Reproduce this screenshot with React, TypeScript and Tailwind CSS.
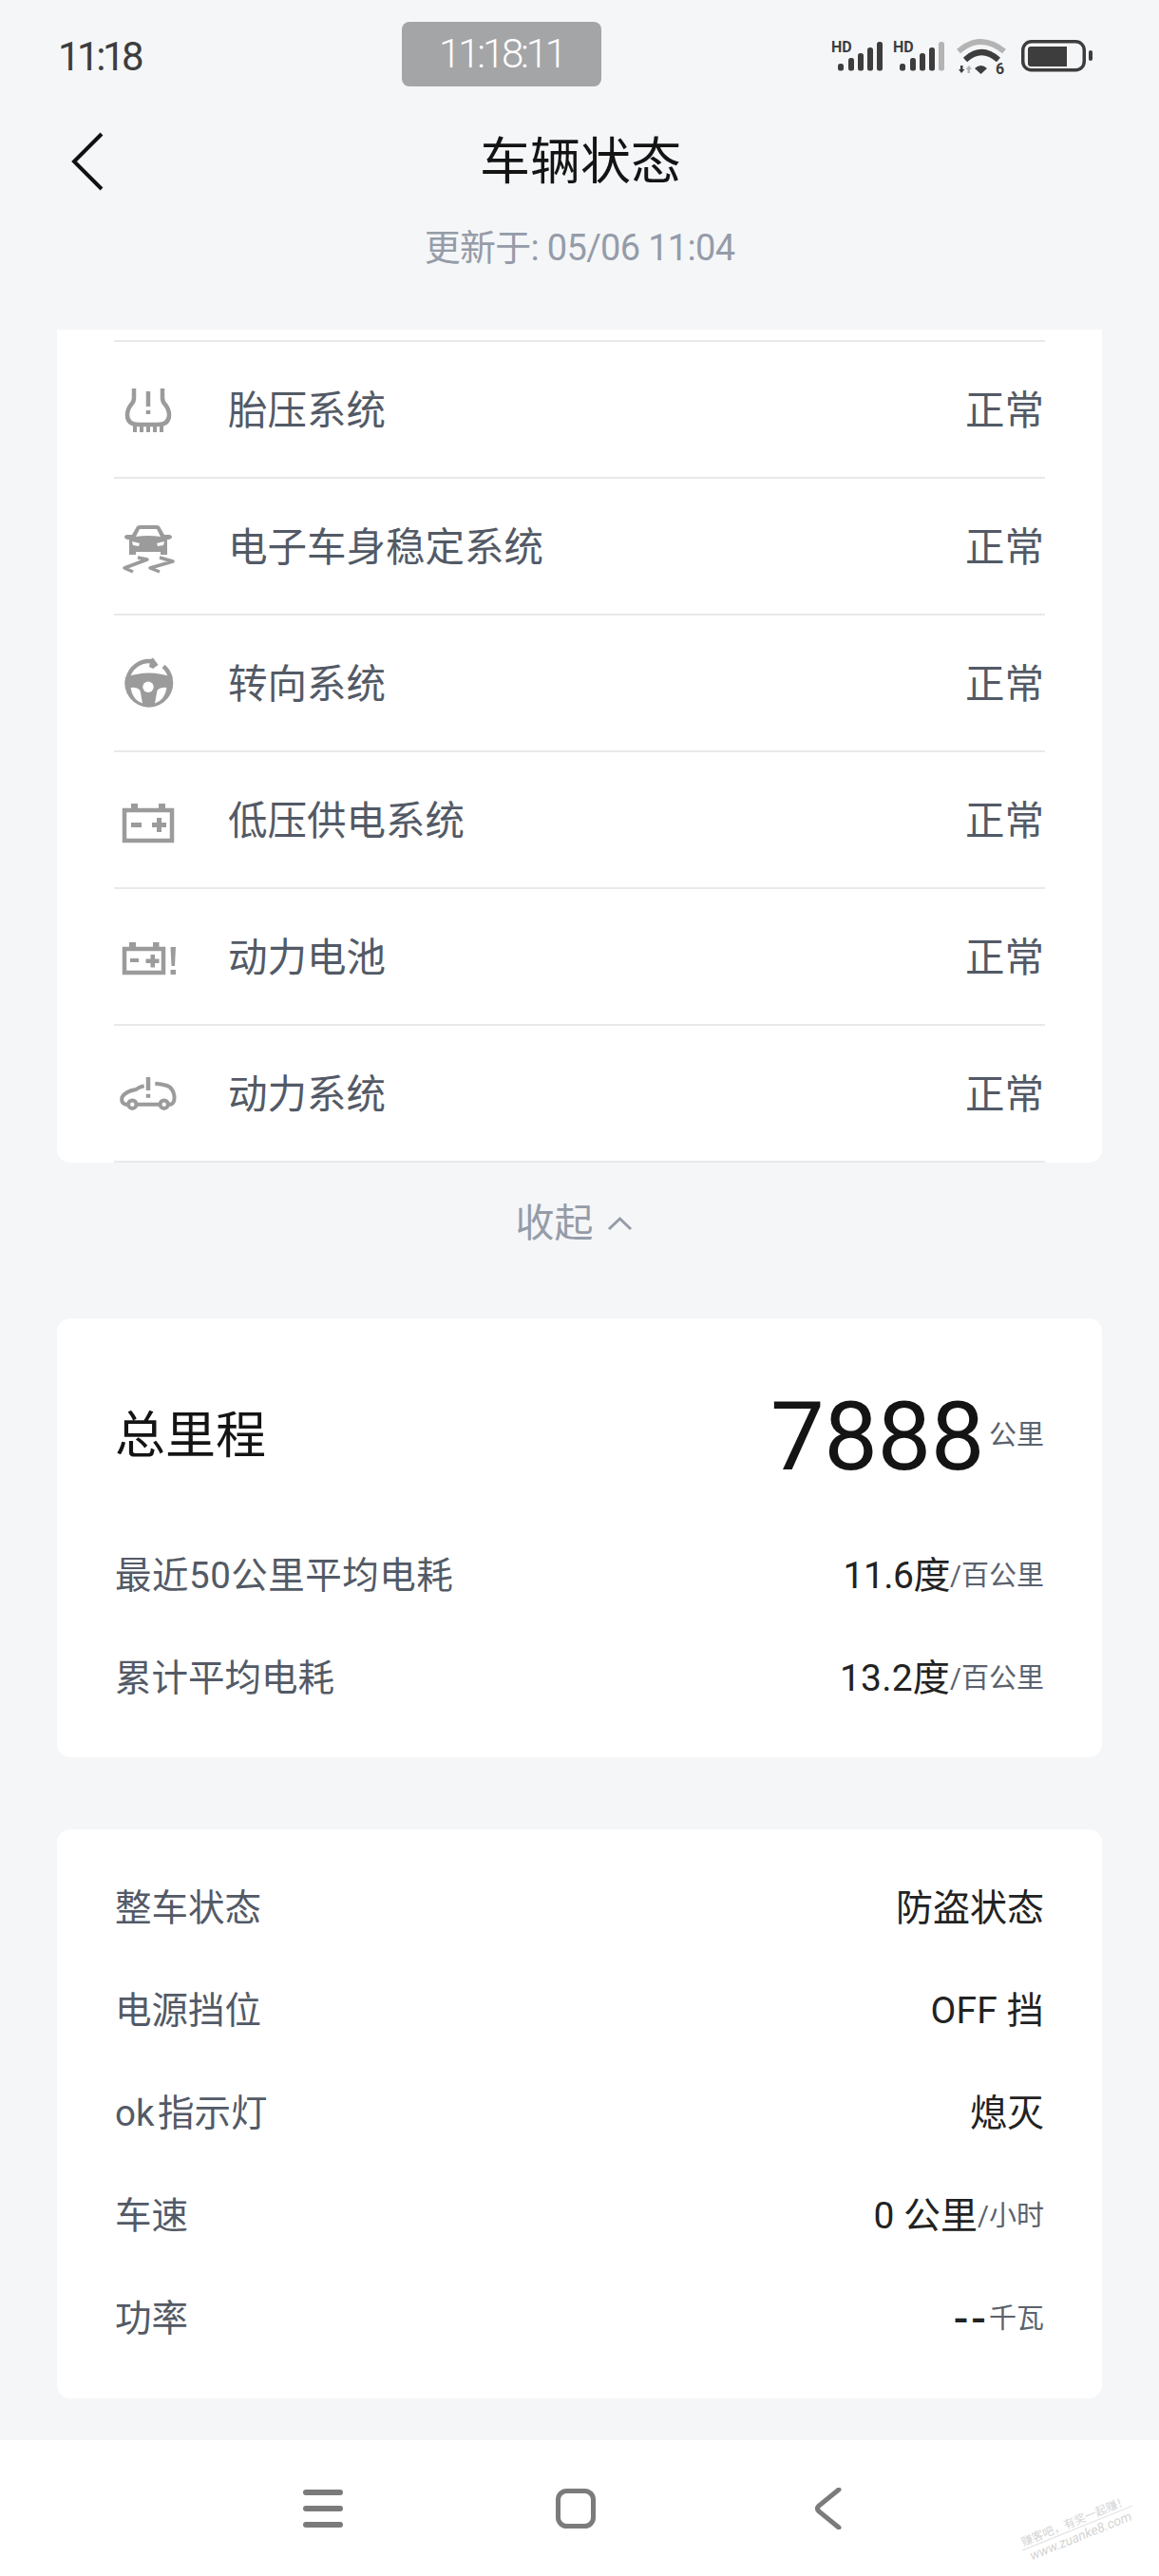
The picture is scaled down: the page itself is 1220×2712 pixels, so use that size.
const GREY = "#9b9b9b";

function TireIcon() {
  return (
    <svg width="72" height="72" viewBox="0 0 72 72" fill="none" stroke={GREY} strokeWidth="4.5">
      <path d="M21 14V24Q21 28 18 31Q14 36 14 42Q14 52 26 52H46Q58 52 58 42Q58 36 54 31Q51 28 51 24V14" />
      <path d="M22 52V60M29 52V60M36 52V60M43 52V60M50 52V60" strokeWidth="4" />
      <path d="M36 17V33M36 37V41" />
    </svg>
  );
}

function SkidIcon() {
  return (
    <svg width="72" height="72" viewBox="0 0 72 72" fill="none">
      <path
        fill={GREY}
        d="M27 14H45Q48 14 49 17L53 24H58Q61 24 61 26.5Q61 28 58 29H56V45H49V42H23V45H16V29H14Q11 28 11 26.5Q11 24 14 24H19L23 17Q24 14 27 14Z"
      />
      <path fill="#fff" d="M27 18H45L49 26Q36 24 23 26Z" />
      <path fill="#fff" d="M19 31L27 33L26 36L20 35Z M53 31L45 33L46 36L52 35Z" />
      <path
        stroke={GREY}
        strokeWidth="3.5"
        strokeLinejoin="round"
        d="M25 48L35 50L11 59L20 63M48 48L62 52L38 59L48 63"
      />
    </svg>
  );
}

function WheelIcon() {
  return (
    <svg width="72" height="72" viewBox="0 0 72 72" fill="none">
      <path fill={GREY} d="M12 30Q36.7 21 61.5 30A25.5 25.5 0 1 1 12 30Z" />
      <circle cx="36" cy="40.3" r="5.7" fill="#fff" />
      <path fill="#fff" d="M17.500 41Q24 40 27.500 44Q29 52 30 57.500Q19.500 54 17.500 41ZM55.500 41Q49 40 45.500 44Q44 52 43 57.500Q53.500 54 55.500 41Z" />
      <path stroke={GREY} strokeWidth="4.500" d="M14.500 31A23 23 0 0 1 39 13.200M52 18.500A23 23 0 0 1 59.500 31" />
      <path fill={GREY} d="M41 9.5L46.5 17L41 21L37 19L38.5 11Z" />
    </svg>
  );
}

function BatteryIcon() {
  return (
    <svg width="72" height="72" viewBox="0 0 72 72" fill="none">
      <rect x="11" y="26" width="50" height="32" stroke={GREY} strokeWidth="4.5" />
      <path fill={GREY} d="M18 19H25V24H18ZM47 19H54V24H47ZM18 39H29V44H18ZM40 39H45V34H50V39H55V44H50V49H45V44H40Z" />
    </svg>
  );
}

function BatteryAlertIcon() {
  return (
    <svg width="72" height="72" viewBox="0 0 72 72" fill="none">
      <rect x="11" y="28" width="41" height="25" stroke={GREY} strokeWidth="4.5" />
      <path
        fill={GREY}
        d="M16 21H23V26H16ZM41 21H47.500V26H41ZM17 38H26V42H17ZM33.500 38.500H38.500V34H43V38.500H47.500V43H43V47.500H38.500V43H33.500ZM59.500 26H65L64 46H60.500ZM59.500 50H65V55H59.500Z"
      />
    </svg>
  );
}

function CarAlertIcon() {
  return (
    <svg width="72" height="72" viewBox="0 0 72 72" fill="none" stroke={GREY} strokeWidth="4">
      <path d="M31.700 28.300Q27 29 23 32Q12 34 8.500 40Q7 46 12 47.700H15M24 47.700H48M57.500 47.700H60Q64 46 63.500 39Q62 30 56 28Q50 26 43.300 25.700" />
      <circle cx="19.300" cy="47.700" r="4.200" />
      <circle cx="52.700" cy="47.700" r="4.200" />
      <path d="M36 19V33M36 36.700V40.700" strokeWidth="4.500" />
    </svg>
  );
}

function SignalIcon({ lastBar }: { lastBar: string }) {
  const bars = [
    { x: 7, y: 26 },
    { x: 18, y: 20 },
    { x: 28, y: 15 },
    { x: 38, y: 9 },
  ];
  return (
    <svg width="56" height="36" viewBox="0 0 56 36">
      <text x="0" y="13.500" fontFamily="Roboto, sans-serif" fontWeight="700" fontSize="16" fill="#3d3d3d">
        HD
      </text>
      {bars.map((bar) => (
        <rect key={bar.x} x={bar.x} y={bar.y} width="6" height={33.5 - bar.y} rx="2.500" fill="#3d3d3d" />
      ))}
      <rect x="48" y="3" width="6" height="30.500" rx="2.500" fill={lastBar} />
    </svg>
  );
}

function WifiIcon() {
  return (
    <svg width="52" height="38" viewBox="0 0 52 38" fill="none">
      <path d="M2 14Q25 -6 50 14" stroke="#b4b4b4" strokeWidth="6" />
      <path d="M9 23Q26 7 44 23" stroke="#3d3d3d" strokeWidth="6" />
      <path d="M19 32Q25.500 26 32 32L25.500 38Z" fill="#3d3d3d" />
      <path d="M4 29H6.500V33H8.500L5 37L2 33H4Z" fill="#3d3d3d" />
      <path d="M11.500 37H14V33H16L13 29L9.500 33H11.500Z" fill="#b4b4b4" />
      <text x="41" y="38" fontFamily="Roboto, sans-serif" fontWeight="700" fontSize="16" fill="#3d3d3d">
        6
      </text>
    </svg>
  );
}

function BatteryStatusIcon() {
  return (
    <svg width="75" height="34" viewBox="0 0 75 34" fill="none">
      <rect x="1.750" y="1.750" width="64.500" height="30" rx="9" stroke="#3d3d3d" strokeWidth="3.500" />
      <path d="M10 7H48V28H10Q7 28 7 25V10Q7 7 10 7Z" fill="#3d3d3d" />
      <rect x="71" y="11" width="4" height="11" rx="2" fill="#3d3d3d" />
    </svg>
  );
}

const systems = [
  { name: "胎压系统", icon: <TireIcon /> },
  { name: "电子车身稳定系统", icon: <SkidIcon /> },
  { name: "转向系统", icon: <WheelIcon /> },
  { name: "低压供电系统", icon: <BatteryIcon /> },
  { name: "动力电池", icon: <BatteryAlertIcon /> },
  { name: "动力系统", icon: <CarAlertIcon /> },
];

const vehicleRows = [
  { label: "整车状态", value: "防盗状态", unit: "", valueClass: "" },
  { label: "电源挡位", value: "OFF 挡", unit: "", valueClass: "tracking-[0.2px]" },
  { label: "ok 指示灯", value: "熄灭", unit: "", labelClass: "[word-spacing:-6px]", valueClass: "" },
  { label: "车速", value: "0 公里", unit: "/小时", valueClass: "" },
  { label: "功率", value: "--", unit: "千瓦", valueClass: "text-[46px] font-medium tracking-[3px]" },
];

function DataRow({
  label,
  value,
  unit,
  labelClass = "",
  valueClass = "",
}: {
  label: string;
  value: string;
  unit: string;
  labelClass?: string;
  valueClass?: string;
}) {
  return (
    <div className="flex h-[108px] items-center justify-between">
      <span className={`text-[38.5px] text-[#535a66] ${labelClass}`}>{label}</span>
      <span className="flex items-center">
        <span className={`text-[39px] text-[#222222] ${valueClass}`}>{value}</span>
        {unit && <span className="text-[29px] text-[#5b626d]">{unit}</span>}
      </span>
    </div>
  );
}

export default function App() {
  return (
    <div className="relative flex h-[2712px] w-[1220px] flex-col overflow-hidden bg-[#f5f6f8] font-['Roboto','Noto_Sans_CJK_SC',sans-serif] leading-none">
      {/* status bar */}
      <div className="flex h-[114px] items-center pl-[61px] pr-[70px]">
        <span className="mt-[6px] w-[362px] text-[42px] tracking-[-3.500px] text-[#3d3d3d]">11:18</span>
        <span className="flex h-[68px] w-[210px] items-center justify-center rounded-[8px] bg-[#a4a5a7] text-[42px] font-light tracking-[-3.200px] text-white">
          11:18:11
        </span>
        <div className="ml-auto mt-[4px] flex items-center">
          <SignalIcon lastBar="#3d3d3d" />
          <div className="ml-[9px]">
            <SignalIcon lastBar="#b4b4b4" />
          </div>
          <div className="ml-[11px]">
            <WifiIcon />
          </div>
          <div className="ml-[16px]">
            <BatteryStatusIcon />
          </div>
        </div>
      </div>

      {/* header */}
      <div className="grid h-[112px] grid-cols-[1fr_auto_1fr] items-center pl-[74px] pr-[72px]">
        <svg width="36" height="62" viewBox="0 0 36 62" fill="none" stroke="#111111" strokeWidth="4">
          <path d="M33 2L4 31L33 60" strokeLinejoin="miter" />
        </svg>
        <h1 className="pt-[2px] text-[53px] font-normal text-[#141414]">车辆状态</h1>
        <span />
      </div>
      <div className="flex h-[68px] items-center justify-center pt-[2px] text-[38px] tracking-[-0.700px] text-[#959ca8]">
        更新于: 05/06 11:04
      </div>

      {/* systems list, scrolled so the top edge is cut square */}
      <div className="mx-[60px] mt-[53px] rounded-b-[14px] bg-white px-[60px] pt-[11px]">
        <div className="border-t-2 border-[#e9e9eb]">
          {systems.map((system) => (
            <div key={system.name} className="flex h-[144px] items-center border-b-2 border-[#e9e9eb]">
              <div className="w-[120px]">{system.icon}</div>
              <span className="pt-[3px] text-[41.500px] text-[#535a66]">{system.name}</span>
              <span className="ml-auto pr-[1px] pt-[3px] text-[41.500px] text-[#535a66]">正常</span>
            </div>
          ))}
        </div>
      </div>

      <div className="flex h-[126px] items-center justify-center gap-[14px] pr-[12px] pt-[2px] text-[41px] text-[#959ca8]">
        收起
        <svg width="27" height="16" viewBox="0 0 27 16" fill="none" stroke="#959ca8" strokeWidth="3">
          <path d="M2 14L13.500 3L25 14" />
        </svg>
      </div>

      {/* mileage */}
      <div className="mx-[60px] mt-[38px] rounded-[14px] bg-white px-[61px] pb-[29px] pt-[62px]">
        <div className="flex h-[122px] items-center justify-between">
          <span className="pt-[3px] text-[53px] text-[#141414]">总里程</span>
          <span className="flex items-center gap-[5px]">
            <span className="pt-[3px] text-[101px] font-normal tracking-[-0.500px] text-[#141414]">7888</span>
            <span className="text-[29px] text-[#5b626d]">公里</span>
          </span>
        </div>
        <div className="mt-[33px]">
          <DataRow label="最近50公里平均电耗" labelClass="tracking-[0.500px]" value="11.6度" valueClass="tracking-[-0.500px]" unit="/百公里" />
          <DataRow label="累计平均电耗" value="13.2度" valueClass="tracking-[0.200px]" unit="/百公里" />
        </div>
      </div>

      {/* vehicle state */}
      <div className="mx-[60px] mt-[76px] rounded-[14px] bg-white px-[61px] pb-[30px] pt-[29px]">
        {vehicleRows.map((row) => (
          <DataRow
            key={row.label}
            label={row.label}
            labelClass={row.labelClass}
            value={row.value}
            valueClass={row.valueClass}
            unit={row.unit}
          />
        ))}
      </div>

      {/* navigation bar */}
      <div className="mt-[44px] grid h-[143px] grid-cols-[266px_266px_266px] items-center justify-center bg-white pr-[8px]">
        <div className="flex justify-center">
          <svg width="44" height="40" viewBox="0 0 44 40" fill="#7b7b7b">
            <rect x="1" y="0" width="42" height="6" rx="3" />
            <rect x="1" y="17" width="42" height="6" rx="3" />
            <rect x="1" y="34" width="42" height="6" rx="3" />
          </svg>
        </div>
        <div className="flex justify-center">
          <svg width="44" height="44" viewBox="0 0 44 44" fill="none" stroke="#7b7b7b" strokeWidth="5">
            <rect x="3.500" y="3.500" width="37" height="37" rx="9" />
          </svg>
        </div>
        <div className="flex justify-center">
          <svg width="28" height="44" viewBox="0 0 28 44" fill="none" stroke="#7b7b7b" strokeWidth="5" strokeLinecap="round">
            <path d="M25 2L4 19Q1 22 4 25L25 42" />
          </svg>
        </div>
      </div>

      {/* forum watermark */}
      <div className="absolute bottom-[35px] right-[23px] w-[125px] -rotate-[22deg] text-center text-[#d4d4d4]">
        <div className="border-b border-[#dddddd] pb-[1px] text-[12px]">赚客吧，有奖一起赚！</div>
        <div className="pt-[1px] text-[14px] italic">www.zuanke8.com</div>
      </div>
    </div>
  );
}
